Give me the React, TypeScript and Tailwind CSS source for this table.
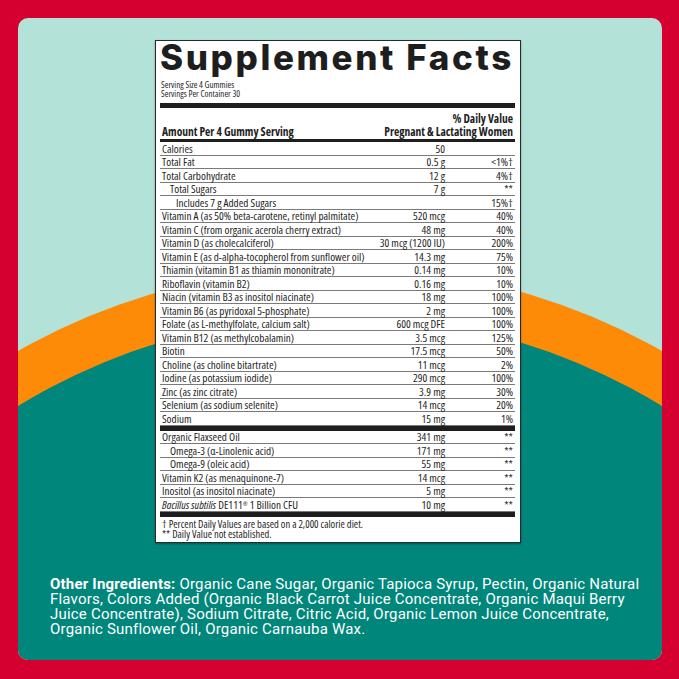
import React from "react";

type Row = { name: React.ReactNode; amount: string; dv: string; indent?: number };

const mainRows: Row[] = [
  { name: "Calories", amount: "50", dv: "" },
  { name: "Total Fat", amount: "0.5 g", dv: "<1%†" },
  { name: "Total Carbohydrate", amount: "12 g", dv: "4%†" },
  { name: "Total Sugars", amount: "7 g", dv: "**", indent: 1 },
  { name: "Includes 7 g Added Sugars", amount: "", dv: "15%†", indent: 2 },
  { name: "Vitamin A (as 50% beta-carotene, retinyl palmitate)", amount: "520 mcg", dv: "40%" },
  { name: "Vitamin C (from organic acerola cherry extract)", amount: "48 mg", dv: "40%" },
  { name: "Vitamin D (as cholecalciferol)", amount: "30 mcg (1200 IU)", dv: "200%" },
  { name: "Vitamin E (as d-alpha-tocopherol from sunflower oil)", amount: "14.3 mg", dv: "75%" },
  { name: "Thiamin (vitamin B1 as thiamin mononitrate)", amount: "0.14 mg", dv: "10%" },
  { name: "Riboflavin (vitamin B2)", amount: "0.16 mg", dv: "10%" },
  { name: "Niacin (vitamin B3 as inositol niacinate)", amount: "18 mg", dv: "100%" },
  { name: "Vitamin B6 (as pyridoxal 5-phosphate)", amount: "2 mg", dv: "100%" },
  { name: "Folate (as L-methylfolate, calcium salt)", amount: "600 mcg DFE", dv: "100%" },
  { name: "Vitamin B12 (as methylcobalamin)", amount: "3.5 mcg", dv: "125%" },
  { name: "Biotin", amount: "17.5 mcg", dv: "50%" },
  { name: "Choline (as choline bitartrate)", amount: "11 mcg", dv: "2%" },
  { name: "Iodine (as potassium iodide)", amount: "290 mcg", dv: "100%" },
  { name: "Zinc (as zinc citrate)", amount: "3.9 mg", dv: "30%" },
  { name: "Selenium (as sodium selenite)", amount: "14 mcg", dv: "20%" },
  { name: "Sodium", amount: "15 mg", dv: "1%" },
];

const otherRows: Row[] = [
  { name: "Organic Flaxseed Oil", amount: "341 mg", dv: "**" },
  { name: "Omega-3 (α-Linolenic acid)", amount: "171 mg", dv: "**", indent: 1 },
  { name: "Omega-9 (oleic acid)", amount: "55 mg", dv: "**", indent: 1 },
  { name: "Vitamin K2 (as menaquinone-7)", amount: "14 mcg", dv: "**" },
  { name: "Inositol (as inositol niacinate)", amount: "5 mg", dv: "**" },
  {
    name: (
      <>
        <i>Bacillus subtilis</i> DE111<sup className="text-[6px]">®</sup> 1 Billion CFU
      </>
    ),
    amount: "10 mg",
    dv: "**",
  },
];

function FactRow({ row }: { row: Row }) {
  const pad = row.indent === 2 ? "pl-[16px]" : row.indent === 1 ? "pl-[10px]" : "pl-[2px]";
  return (
    <div className="grid h-[13.5px] grid-cols-[minmax(0,1fr)_120px_70px] items-center border-b border-[#7a7a7a] leading-none">
      <span className={`whitespace-nowrap ${pad}`}>{row.name}</span>
      <span className="whitespace-nowrap text-right">{row.amount}</span>
      <span className="pr-[2px] text-right">{row.dv}</span>
    </div>
  );
}

export default function App() {
  return (
    <div className="h-[679px] w-[679px] bg-[#d5002f] pl-[18px] pt-[18px]">
      <div className="relative h-[642px] w-[644px] overflow-hidden rounded-[10px] bg-[#b3e2d9]">
        {/* background arcs */}
        <svg className="absolute inset-0" width="644" height="642" viewBox="0 0 644 642">
          <circle cx="322" cy="902.8" r="654.5" fill="#fd8b07" />
          <circle cx="322" cy="914.7" r="617.3" fill="#00867a" />
        </svg>

        <div className="relative flex flex-col">
          {/* facts panel */}
          <div className="ml-[137px] mt-[22px] w-[366px] border border-[#2a2a2a] bg-white pl-[4px] pr-[5px] text-[#1e1e1e] shadow-[0_1px_2px_rgba(0,0,0,0.35)] font-['Open_Sans',sans-serif] font-stretch-condensed">
            <div className="-mt-[1px] h-[35px] whitespace-nowrap text-[35px] font-extrabold leading-[35px] tracking-[2.6px] font-stretch-normal font-['Inter',sans-serif]">
              Supplement Facts
            </div>
            <div className="mt-[5px] pl-[1px] text-[9px] leading-[9px] font-stretch-[85%]">
              <div>Serving Size 4 Gummies</div>
              <div>Servings Per Container 30</div>
            </div>
            <div className="mt-[5px] h-[5px] bg-[#1e1e1e]" />
            <div className="mt-[4px] text-[11.5px] font-bold leading-[13px] font-stretch-[80%]">
              <div className="pr-[2px] text-right">% Daily Value</div>
              <div className="flex justify-between pl-[2px] pr-[2px]">
                <span>Amount Per 4 Gummy Serving</span>
                <span>Pregnant &amp; Lactating Women</span>
              </div>
            </div>
            <div className="mt-[1px] h-[3px] bg-[#1e1e1e]" />
            <div className="text-[11.2px]">
              {mainRows.map((r, i) => (
                <FactRow key={i} row={r} />
              ))}
            </div>
            <div className="h-[5px] bg-[#1e1e1e]" />
            <div className="text-[11.2px]">
              {otherRows.map((r, i) => (
                <FactRow key={i} row={r} />
              ))}
            </div>
            <div className="h-[5px] bg-[#1e1e1e]" />
            <div className="pb-[2px] pl-[2px] pt-[2px] text-[10.5px] leading-[10.5px]">
              <div>† Percent Daily Values are based on a 2,000 calorie diet.</div>
              <div>** Daily Value not established.</div>
            </div>
          </div>

          {/* other ingredients */}
          <p className="ml-[32px] mt-[34px] text-[15px] leading-[15.3px] tracking-[0.2px] text-white font-['Roboto',sans-serif]">
            <span className="font-bold">Other Ingredients:</span> Organic Cane Sugar, Organic Tapioca Syrup, Pectin, Organic Natural
            <br />
            Flavors, Colors Added (Organic Black Carrot Juice Concentrate, Organic Maqui Berry
            <br />
            Juice Concentrate), Sodium Citrate, Citric Acid, Organic Lemon Juice Concentrate,
            <br />
            Organic Sunflower Oil, Organic Carnauba Wax.
          </p>
        </div>
      </div>
    </div>
  );
}
